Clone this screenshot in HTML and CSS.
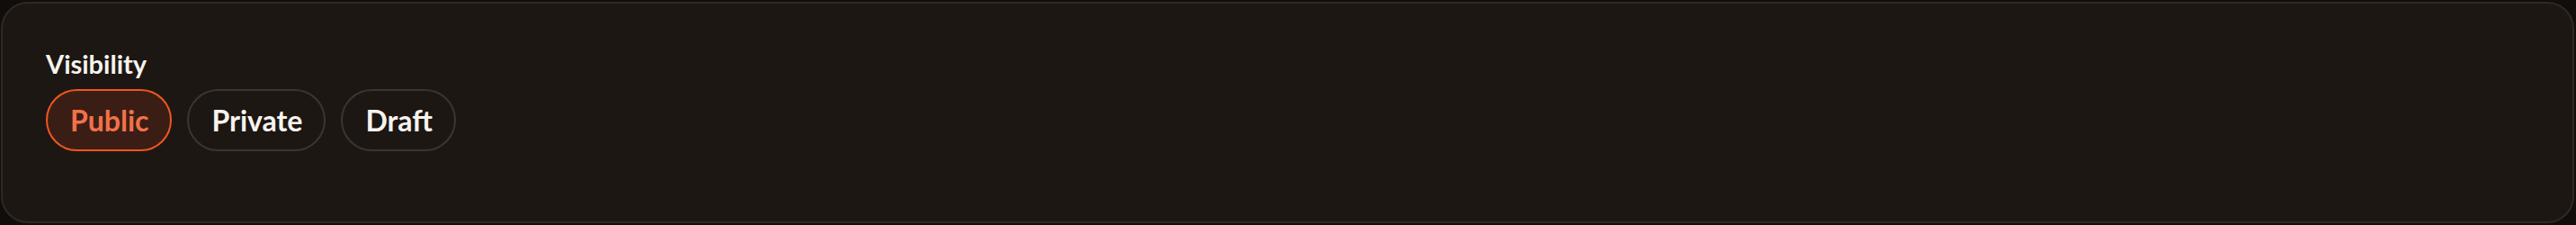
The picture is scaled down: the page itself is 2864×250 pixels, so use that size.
FILE: index.html
```html
<!DOCTYPE html>
<html lang="en">
<head>
<meta charset="utf-8">
<title>Visibility</title>
<link rel="stylesheet" href="styles.css">
</head>
<body>
<div class="card">
  <div class="label">Visibility</div>
  <div class="options">
    <button class="pill active">Public</button>
    <button class="pill">Private</button>
    <button class="pill">Draft</button>
  </div>
</div>
</body>
</html>
```
FILE: styles.css
```css
html, body {
  margin: 0;
  padding: 0;
  background: #110d0a;
}
body {
  padding: 2px 2px 2px 1px;
  box-sizing: border-box;
  height: 250px;
  font-family: "Lato", "Noto Sans", sans-serif;
}
.card {
  box-sizing: border-box;
  height: 246px;
  background: #1c1713;
  border: 2px solid #2f2925;
  border-radius: 30px;
  padding: 49px 48px;
}
.label {
  color: #f7f3ee;
  font-size: 29px;
  font-weight: 700;
  line-height: 36px;
  letter-spacing: 0;
}
.options {
  display: flex;
  gap: 17px;
  margin-top: 10px;
}
.pill {
  box-sizing: border-box;
  height: 69px;
  padding: 0 24px 0 25px;
  border-radius: 35px;
  border: 2px solid #3b3531;
  background: transparent;
  color: #f7f3ee;
  font-family: "Lato", "Noto Sans", sans-serif;
  font-size: 32px;
  font-weight: 700;
  line-height: 1;
}
.pill.active {
  border-color: #f0561f;
  background: #3a1e15;
  color: #f2714a;
}
```
